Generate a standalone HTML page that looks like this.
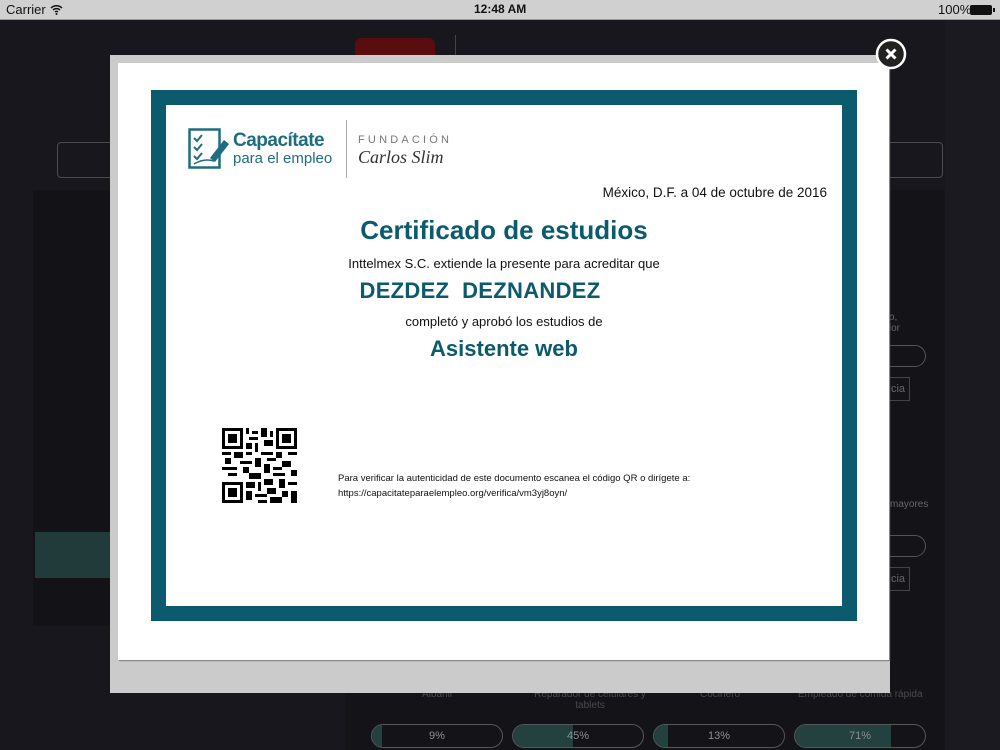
<!DOCTYPE html>
<html><head><meta charset="utf-8"><style>
*{margin:0;padding:0;box-sizing:border-box}
body{width:1000px;height:750px;overflow:hidden;background:#18171d;font-family:"Liberation Sans",sans-serif;position:relative}
.a{position:absolute}
.status{left:0;top:0;width:1000px;height:20px;background:#d0d0d0;font-size:13px;color:#111;border-bottom:1px solid #9a9a9a}
.t{color:#0b5a6e;font-weight:bold;text-align:center;width:676px;left:166px}
.s{color:#111;text-align:center;width:676px;left:166px;font-size:13px}
.pill{border:1px solid #55575c;border-radius:12px;height:24px;width:132px;top:724px;overflow:hidden;color:#8c8f94;font-size:11px;text-align:center;line-height:22px}
.pill i{position:absolute;left:0;top:0;bottom:0;background:#22413f}
.pill span{position:relative}
</style></head><body>
<div class="a status">
<span class="a" style="left:6px;top:2px">Carrier</span>
<svg class="a" style="left:50px;top:4px" width="13" height="11" viewBox="0 0 13 11"><path d="M1 4a8 8 0 0 1 11 0M3 6a5 5 0 0 1 7 0M5 8a2 2 0 0 1 3 0" stroke="#111" stroke-width="1.5" fill="none"/><circle cx="6.5" cy="10" r="1" fill="#111"/></svg>
<span class="a" style="left:474px;top:2px;font-weight:bold;font-size:12px">12:48 AM</span>
<span class="a" style="left:938px;top:2px">100%</span>
<div class="a" style="left:970px;top:5px;width:22px;height:10px;background:#111;border-radius:2px"></div>
<div class="a" style="left:993px;top:8px;width:2px;height:4px;background:#111"></div>
</div>
<div class="a" style="left:945px;top:20px;width:55px;height:730px;background:#1b1a21"></div>
<div class="a" style="left:355px;top:38px;width:80px;height:30px;background:#5a0d0e;border-radius:6px"></div>
<div class="a" style="left:455px;top:35px;width:1px;height:30px;background:#444"></div>
<div class="a" style="left:57px;top:142px;width:886px;height:36px;border:1px solid #4a4a4e;border-radius:4px"></div>
<div class="a" style="left:33px;top:190px;width:330px;height:436px;background:#131217"></div>
<div class="a" style="left:35px;top:532px;width:100px;height:46px;background:#213b3b"></div>
<div class="a" style="left:345px;top:190px;width:600px;height:560px;background:#141318"></div>
<div class="a" style="left:870px;top:345px;width:56px;height:22px;border:1px solid #555;border-radius:11px"></div>
<div class="a" style="left:870px;top:377px;width:40px;height:24px;border:1px solid #444;color:#666;font-size:11px;line-height:22px;text-align:right;padding-right:4px">cia</div>
<div class="a" style="left:870px;top:535px;width:56px;height:22px;border:1px solid #555;border-radius:11px"></div>
<div class="a" style="left:870px;top:567px;width:40px;height:24px;border:1px solid #444;color:#666;font-size:11px;line-height:22px;text-align:right;padding-right:4px">cia</div>
<div class="a" style="left:880px;top:312px;color:#666;font-size:10px">ero,<br>ador</div>
<div class="a" style="left:890px;top:499px;color:#666;font-size:10px">mayores</div>
<div class="a" style="left:380px;top:689px;width:600px;color:#4a4a50;font-size:10px">
<span class="a" style="left:42px">Albañil</span><span class="a" style="left:145px;text-align:center;width:130px">Reparador de celulares y tablets</span><span class="a" style="left:320px">Cocinero</span><span class="a" style="left:418px">Empleado de comida rápida</span></div>
<div class="a pill" style="left:371px"><i style="width:10px"></i><span>9%</span></div>
<div class="a pill" style="left:512px"><i style="width:60px"></i><span>45%</span></div>
<div class="a pill" style="left:653px"><i style="width:14px"></i><span>13%</span></div>
<div class="a pill" style="left:794px"><i style="width:96px"></i><span>71%</span></div>

<div class="a" style="left:110px;top:55px;width:780px;height:638px;background:#cbcbcb"></div>
<div class="a" style="left:118px;top:63px;width:771px;height:597px;background:#fff;box-shadow:1px 1px 1px #777"></div>
<div class="a" style="left:151px;top:90px;width:706px;height:531px;background:#0b5a6e"></div>
<div class="a" style="left:166px;top:105px;width:676px;height:501px;background:#fff"></div>

<svg class="a" style="left:188px;top:128px" width="42" height="42" viewBox="0 0 42 42"><rect x="1.5" y="1.5" width="30" height="38" fill="none" stroke="#1f6d80" stroke-width="2.5"/><path d="M6 10l3 3 5-6M6 19l3 3 5-6M6 28l3 3 5-6" stroke="#1f6d80" stroke-width="2" fill="none"/><path d="M22 30l14-18 5 4-14 18z" fill="#1f6d80"/><path d="M6 36q10-6 20-3" stroke="#1f6d80" stroke-width="1.5" fill="none"/></svg>
<div class="a" style="left:233px;top:130px;color:#1f6d80;font-weight:bold;font-size:19px;letter-spacing:-0.5px">Capacítate</div>
<div class="a" style="left:233px;top:150px;color:#1f6d80;font-size:15px">para el empleo</div>
<div class="a" style="left:346px;top:120px;width:1px;height:58px;background:#aaa"></div>
<div class="a" style="left:358px;top:134px;color:#777;font-size:11px;letter-spacing:3.2px">FUNDACIÓN</div>
<div class="a" style="left:358px;top:147px;color:#333;font-size:18px;font-style:italic;font-family:'Liberation Serif',serif">Carlos Slim</div>

<div class="a" style="left:500px;top:185px;width:327px;text-align:right;font-size:13.5px;color:#111">México, D.F. a 04 de octubre de 2016</div>
<div class="a t" style="top:215px;font-size:26px">Certificado de estudios</div>
<div class="a s" style="top:256px">Inttelmex S.C. extiende la presente para acreditar que</div>
<div class="a t" style="top:278px;font-size:22px;left:142px;letter-spacing:0.3px">DEZDEZ&nbsp; DEZNANDEZ</div>
<div class="a s" style="top:314px">completó y aprobó los estudios de</div>
<div class="a t" style="top:336px;font-size:22px">Asistente web</div>

<svg class="a" style="left:222px;top:428px" width="75" height="75" viewBox="0 0 25 25" shape-rendering="crispEdges">
<g fill="#000">
<path d="M0 0h7v7H0zM18 0h7v7h-7zM0 18h7v7H0z"/>
</g><g fill="#fff"><path d="M1 1h5v5H1zM19 1h5v5h-5zM1 19h5v5H1z"/></g>
<g fill="#000"><path d="M2 2h3v3H2zM20 2h3v3h-3zM2 20h3v3H2z"/>
<path d="M8 0h1v2H8zM10 1h2v1h-2zM13 0h2v3h-2zM16 1h1v2h-1zM9 3h3v1H9zM8 5h2v2H8zM11 5h1v3h-1zM14 4h3v2h-3zM0 8h3v1H0zM4 8h3v2H4zM8 8h2v1H8zM13 8h4v1h-4zM18 8h2v2h-2zM22 8h3v1h-3zM1 10h2v2H1zM6 11h4v1H6zM11 10h2v3h-2zM15 10h3v1h-3zM20 11h3v2h-3zM0 13h5v1H0zM7 13h2v2H7zM14 12h2v3h-2zM17 13h3v1h-3zM23 14h2v2h-2zM2 15h3v1H2zM9 15h4v2H9zM17 15h4v1h-4zM8 18h3v2H8zM12 18h1v3h-1zM14 17h3v2h-3zM19 17h2v3h-2zM22 18h3v1h-3zM8 21h2v3H8zM11 22h4v1h-4zM15 20h3v2h-3zM20 21h2v2h-2zM23 21h2v4h-2zM16 23h4v2h-4zM12 24h3v1h-3z"/></g>
</svg>
<div class="a" style="left:338px;top:471px;font-size:9.5px;color:#111;line-height:15px">Para verificar la autenticidad de este documento escanea el código QR o dirígete a:<br>https://capacitateparaelempleo.org/verifica/vm3yj8oyn/</div>

<svg class="a" style="left:875px;top:38px" width="32" height="32" viewBox="0 0 32 32"><circle cx="16" cy="16" r="14" fill="#222" stroke="#fff" stroke-width="2.5"/><path d="M11.5 11.5l9 9M20.5 11.5l-9 9" stroke="#fff" stroke-width="3"/></svg>
</body></html>
